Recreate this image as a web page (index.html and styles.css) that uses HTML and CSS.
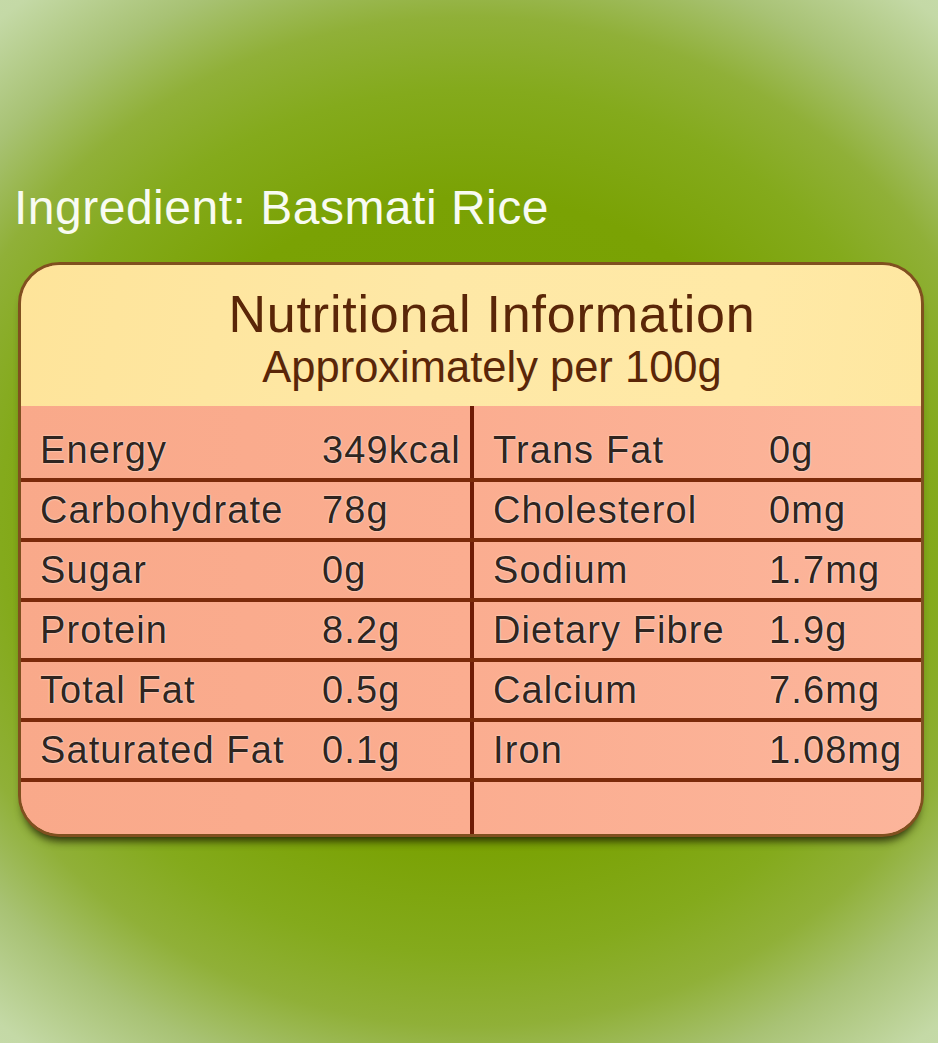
FILE: index.html
```
<!DOCTYPE html>
<html lang="en">
<head>
<meta charset="utf-8">
<title>Basmati Rice Nutrition</title>
<link rel="stylesheet" href="styles.css">
</head>
<body>
<div class="page">
  <h2 class="ingredient">Ingredient: Basmati Rice</h2>
  <div class="card">
    <div class="card-head">
      <div class="head-title">Nutritional Information</div>
      <div class="head-sub">Approximately per 100g</div>
    </div>
    <div class="rows">
      <div class="row first">
        <div class="half left"><span class="lbl">Energy</span><span class="val">349kcal</span></div>
        <div class="vdiv"></div>
        <div class="half right"><span class="lbl">Trans Fat</span><span class="val">0g</span></div>
      </div>
      <div class="row">
        <div class="half left"><span class="lbl">Carbohydrate</span><span class="val">78g</span></div>
        <div class="vdiv"></div>
        <div class="half right"><span class="lbl">Cholesterol</span><span class="val">0mg</span></div>
      </div>
      <div class="row">
        <div class="half left"><span class="lbl">Sugar</span><span class="val">0g</span></div>
        <div class="vdiv"></div>
        <div class="half right"><span class="lbl">Sodium</span><span class="val">1.7mg</span></div>
      </div>
      <div class="row">
        <div class="half left"><span class="lbl">Protein</span><span class="val">8.2g</span></div>
        <div class="vdiv"></div>
        <div class="half right"><span class="lbl">Dietary Fibre</span><span class="val">1.9g</span></div>
      </div>
      <div class="row">
        <div class="half left"><span class="lbl">Total Fat</span><span class="val">0.5g</span></div>
        <div class="vdiv"></div>
        <div class="half right"><span class="lbl">Calcium</span><span class="val">7.6mg</span></div>
      </div>
      <div class="row">
        <div class="half left"><span class="lbl">Saturated Fat</span><span class="val">0.1g</span></div>
        <div class="vdiv"></div>
        <div class="half right"><span class="lbl">Iron</span><span class="val">1.08mg</span></div>
      </div>
      <div class="row empty">
        <div class="half left"></div>
        <div class="vdiv"></div>
        <div class="half right"></div>
      </div>
    </div>
  </div>
</div>
</body>
</html>
```

FILE: styles.css
```
html, body {
  margin: 0;
  padding: 0;
}

body {
  width: 938px;
  height: 1043px;
  overflow: hidden;
  font-family: "Liberation Sans", Arial, sans-serif;
  background:
    radial-gradient(ellipse 782px 721px at 50% 50%, #76a000 0%, #7aa204 45%, #84aa1c 60%, #90b038 70%, #a8c274 80%, #c4d9a6 92%, #c8dcac 100%);
}

.page {
  padding-top: 180px;
  height: 1043px;
  box-sizing: border-box;
}

.ingredient {
  margin: 0;
  padding-left: 14px;
  font-size: 48px;
  line-height: 56px;
  font-weight: normal;
  color: #f8fbf2;
  letter-spacing: 0.5px;
}

.card {
  margin: 26px 0 0 18px;
  width: 906px;
  height: 575px;
  box-sizing: border-box;
  border: 3px solid #80501f;
  border-radius: 42px;
  overflow: hidden;
  display: flex;
  flex-direction: column;
  background: #fcb196;
  box-shadow: 0 9px 9px -5px rgba(25, 25, 5, 0.85);
}

.card-head {
  height: 141px;
  flex: none;
  box-sizing: border-box;
  padding: 21px 0 0 42px;
  text-align: center;
  color: #5a2608;
  background: linear-gradient(100deg, #fee49a 0%, #fee8a6 45%, #ffe9a6 80%, #fee7a0 100%);
}

.head-title {
  font-size: 52px;
  line-height: 56px;
  letter-spacing: 0.8px;
}

.head-sub {
  font-size: 43.5px;
  line-height: 50px;
}

.rows {
  flex: 1;
  display: flex;
  flex-direction: column;
}

.row {
  display: flex;
  height: 56px;
  flex: none;
  border-top: 4px solid #7b2a0a;
  background: linear-gradient(90deg, #f9a98a 0%, #fbad90 50%, #fcb59b 100%);
}

.row.first {
  height: 72px;
  border-top: 0;
  align-items: flex-end;
}

.row.empty {
  flex: 1;
  height: auto;
}

.half {
  display: flex;
  align-items: flex-end;
  box-sizing: border-box;
  padding-left: 19px;
  height: 56px;
  font-size: 38px;
  line-height: 56px;
  color: #2f2520;
  text-shadow: 0 0 2px rgba(255, 238, 228, 0.95), 0 0 1px rgba(255, 238, 228, 0.9);
  letter-spacing: 1.1px;
}

.row.empty .half {
  height: auto;
}

.half.left {
  width: 449px;
}

.half.right {
  flex: 1;
}

.half.left .lbl {
  width: 282px;
  flex: none;
}

.half.right .lbl {
  width: 276px;
  flex: none;
}

.vdiv {
  width: 4px;
  align-self: stretch;
  background: #6e1c06;
}
```
